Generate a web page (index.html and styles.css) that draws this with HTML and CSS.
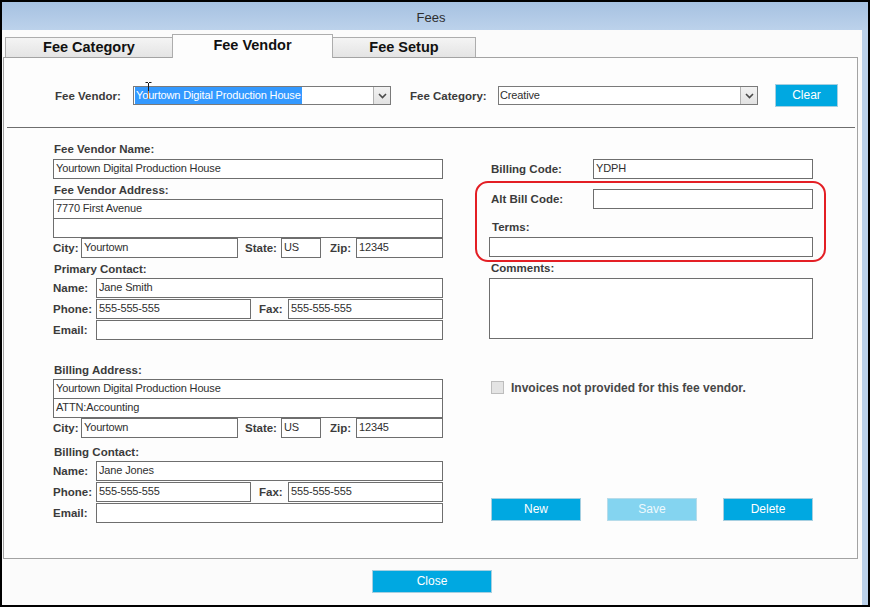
FILE: index.html
```html
<!DOCTYPE html>
<html>
<head>
	<title>Fees</title>
	<link rel="stylesheet" href="styles.css">
</head>
<body>
	<div class="window">
		<div class="titlebar">Fees</div>
		<div class="client">
			<div class="tabs">
				<div class="tab tab-category">Fee Category</div>
				<div class="tab tab-vendor active">Fee Vendor</div>
				<div class="tab tab-setup">Fee Setup</div>
			</div>
			<div class="panel">
				<div class="lookup">
					<span class="lbl lookup-vendor-lbl">Fee Vendor:</span>
					<div class="combo combo-vendor">
						<span class="combo-text"><span class="selected">Yourtown Digital Production House</span></span>
						<span class="combo-btn">
							<svg width="9" height="6" viewBox="0 0 9 6"><polyline points="1,1 4.5,4.5 8,1" fill="none" stroke="#4a4a4a" stroke-width="1.6"/></svg>
						</span>
						<svg class="ibeam" width="7" height="18" viewBox="0 0 7 18">
							<path d="M0.5 0.5 H3 M4 0.5 H6.5 M3.5 1 V9" stroke="#1a1a1a" stroke-width="1" fill="none"/>
							<path d="M3.5 9 V17" stroke="#c8722e" stroke-width="1" fill="none"/>
						</svg>
					</div>
					<span class="lbl lookup-category-lbl">Fee Category:</span>
					<div class="combo combo-category">
						<span class="combo-text">Creative</span>
						<span class="combo-btn">
							<svg width="9" height="6" viewBox="0 0 9 6"><polyline points="1,1 4.5,4.5 8,1" fill="none" stroke="#4a4a4a" stroke-width="1.6"/></svg>
						</span>
					</div>
					<button class="btn btn-clear">Clear</button>
				</div>
				<div class="divider"></div>

				<div class="form">
					<div class="col-left">
						<div class="section-label first">Fee Vendor Name:</div>
						<input class="box" value="Yourtown Digital Production House">
						<div class="section-label">Fee Vendor Address:</div>
						<div class="stack">
							<input class="box" value="7770 First Avenue">
							<input class="box" value="">
						</div>
						<div class="row">
							<span class="lbl w-city">City:</span>
							<input class="box w-city-in" value="Yourtown">
							<span class="lbl w-state">State:</span>
							<input class="box w-state-in" value="US">
							<span class="lbl w-zip">Zip:</span>
							<input class="box w-zip-in" value="12345">
						</div>
						<div class="section-label">Primary Contact:</div>
						<div class="row">
							<span class="lbl w-name">Name:</span>
							<input class="box grow" value="Jane Smith">
						</div>
						<div class="row">
							<span class="lbl w-name">Phone:</span>
							<input class="box w-phone-in" value="555-555-555">
							<span class="lbl w-fax">Fax:</span>
							<input class="box grow" value="555-555-555">
						</div>
						<div class="row">
							<span class="lbl w-name">Email:</span>
							<input class="box grow" value="">
						</div>

						<div class="section-label billing-start">Billing Address:</div>
						<div class="stack">
							<input class="box" value="Yourtown Digital Production House">
							<input class="box" value="ATTN:Accounting">
						</div>
						<div class="row">
							<span class="lbl w-city">City:</span>
							<input class="box w-city-in" value="Yourtown">
							<span class="lbl w-state">State:</span>
							<input class="box w-state-in" value="US">
							<span class="lbl w-zip">Zip:</span>
							<input class="box w-zip-in" value="12345">
						</div>
						<div class="section-label billing-contact">Billing Contact:</div>
						<div class="row">
							<span class="lbl w-name">Name:</span>
							<input class="box grow" value="Jane Jones">
						</div>
						<div class="row">
							<span class="lbl w-name">Phone:</span>
							<input class="box w-phone-in" value="555-555-555">
							<span class="lbl w-fax">Fax:</span>
							<input class="box grow" value="555-555-555">
						</div>
						<div class="row">
							<span class="lbl w-name">Email:</span>
							<input class="box grow" value="">
						</div>
					</div>

					<div class="col-right">
						<div class="row">
							<span class="lbl w-code">Billing Code:</span>
							<input class="box grow" value="YDPH">
						</div>
						<div class="highlight">
							<div class="row first-row">
								<span class="lbl w-code">Alt Bill Code:</span>
								<input class="box grow" value="">
							</div>
							<div class="section-label terms">Terms:</div>
							<input class="box" value="">
						</div>
						<div class="section-label comments">Comments:</div>
						<textarea class="box notes"></textarea>
						<div class="check-row">
							<span class="check"></span>
							<span class="check-lbl">Invoices not provided for this fee vendor.</span>
						</div>
						<div class="actions">
							<button class="btn">New</button>
							<button class="btn btn-disabled">Save</button>
							<button class="btn">Delete</button>
						</div>
					</div>
				</div>
			</div>
			<div class="footer">
				<button class="btn btn-close">Close</button>
			</div>
		</div>
	</div>
</body>
</html>
```

FILE: styles.css
```css
* {
	box-sizing: border-box;
}

html, body {
	margin: 0;
	padding: 0;
}

body {
	width: 870px;
	height: 607px;
	font-family: "Liberation Sans", Arial, sans-serif;
	background: #000;
}

.window {
	width: 870px;
	height: 607px;
	border: 2px solid #000;
	background: #bbd1ea;
	display: flex;
	flex-direction: column;
}

.titlebar {
	height: 28px;
	background: linear-gradient(#a6c1e1, #bcd2eb);
	text-align: center;
	line-height: 32px;
	font-size: 13px;
	color: #2e2e2e;
	padding-right: 8px;
	overflow: hidden;
}

.client {
	flex: 1;
	margin-right: 6px;
	background: #fbfbfb;
	display: flex;
	flex-direction: column;
}

/* tabs */
.tabs {
	display: flex;
	align-items: flex-end;
	height: 23px;
	margin: 4px 0 0 3px;
	position: relative;
	z-index: 1;
}

.tab {
	height: 20px;
	border: 1px solid #adadad;
	border-bottom: none;
	background: linear-gradient(#f4f4f4, #e4e4e4);
	font-size: 14.5px;
	font-weight: bold;
	color: #111;
	text-align: center;
	line-height: 19px;
}

.tab-category {
	width: 168px;
}

.tab-vendor {
	width: 161px;
	margin-left: -1px;
}

.tab-setup {
	width: 144px;
	margin-left: -1px;
}

.tab.active {
	height: 24px;
	margin-bottom: -1px;
	background: #fdfdfd;
	line-height: 20px;
	position: relative;
	z-index: 2;
}

/* panel */
.panel {
	height: 502px;
	margin: 0 4px 0 1px;
	border: 1px solid #a3a3a3;
	background: #fdfdfd;
}

.lbl {
	font-size: 11.5px;
	font-weight: bold;
	color: #3b3b3b;
	white-space: nowrap;
}

.lookup {
	display: flex;
	align-items: center;
	height: 23px;
	margin-top: 26px;
	padding-left: 51px;
}

.lookup-vendor-lbl {
	width: 78px;
}

.lookup-category-lbl {
	width: 88px;
	margin-left: 19px;
}

.combo {
	height: 19px;
	border: 1px solid #7a7a7a;
	background: #fff;
	display: flex;
	position: relative;
}

.combo-vendor {
	width: 258px;
}

.combo-category {
	width: 260px;
}

.combo-text {
	flex: 1;
	font-size: 11px;
	letter-spacing: -0.15px;
	color: #2f2f2f;
	line-height: 16px;
	padding-left: 1px;
}

.selected {
	display: inline-block;
	background: #3399ff;
	color: #fff;
	padding: 0 1px;
	height: 17px;
}

.combo-btn {
	width: 17px;
	height: 17px;
	background: linear-gradient(#f2f2f2, #e2e2e2);
	border-left: 1px solid #b0b0b0;
	display: flex;
	align-items: center;
	justify-content: center;
}

.ibeam {
	position: absolute;
	left: 11px;
	top: -5px;
}

.btn {
	height: 23px;
	border: 1px solid #a6cfe0;
	background: #00a8e1;
	color: #fff;
	font-family: "Liberation Sans", Arial, sans-serif;
	font-size: 12px;
	padding: 0 0 1px;
}

.btn-clear {
	width: 63px;
	margin-left: 17px;
}

.divider {
	height: 1px;
	margin: 20px 2px 0 3px;
	background: #6e6e6e;
}

/* form */
.form {
	display: flex;
	align-items: flex-start;
	padding-left: 49px;
}

.col-left {
	width: 390px;
	padding-top: 14px;
}

.col-right {
	width: 324px;
	margin-left: 46px;
	padding-top: 31px;
}

.section-label {
	font-size: 11.5px;
	font-weight: bold;
	color: #3b3b3b;
	line-height: 14px;
	height: 14px;
	margin: 4px 0 2px;
	padding-left: 1px;
}

.section-label.first {
	margin: 0 0 3px;
}

.section-label.billing-start {
	margin-top: 23px;
}

.section-label.billing-contact {
	margin-top: 7px;
}

.box {
	display: block;
	width: 100%;
	height: 20px;
	margin: 0;
	padding: 0 2px 2px;
	border: 1px solid #6e6e6e;
	border-radius: 0;
	background: #fff;
	font-family: "Liberation Sans", Arial, sans-serif;
	font-size: 11px;
	letter-spacing: -0.15px;
	color: #2f2f2f;
	outline: none;
}

.stack .box + .box {
	margin-top: -1px;
}

.row {
	display: flex;
	align-items: center;
	height: 20px;
}

.row + .row {
	margin-top: 1px;
}

.grow {
	flex: 1;
	width: auto;
	min-width: 0;
}

.w-city { width: 28px; }
.w-city-in { width: 157px; }
.w-state { width: 36px; margin-left: 7px; }
.w-state-in { width: 40px; }
.w-zip { width: 26px; margin-left: 9px; }
.w-zip-in { width: 87px; }
.w-name { width: 43px; }
.w-phone-in { width: 155px; }
.w-fax { width: 29px; margin-left: 8px; }
.w-code { width: 104px; padding-left: 2px; }

.highlight {
	margin: 2px -13px 0 -14px;
	border: 2px solid #e31e24;
	border-radius: 13px;
	padding: 6px 11px 3px 12px;
}

.section-label.terms {
	margin: 11px 0 3px;
	padding-left: 3px;
}

.section-label.comments {
	margin: -1px 0 3px;
	padding-left: 2px;
}

.notes {
	height: 61px;
	resize: none;
}

.check-row {
	display: flex;
	align-items: center;
	height: 13px;
	margin-top: 42px;
	padding-left: 2px;
}

.check {
	width: 13px;
	height: 13px;
	border: 1px solid #bdbdbd;
	background: #e4e4e4;
}

.check-lbl {
	margin-left: 7px;
	font-size: 12px;
	font-weight: bold;
	color: #474747;
}

.actions {
	display: flex;
	gap: 26px;
	margin-top: 104px;
	padding-left: 2px;
}

.actions .btn {
	width: 90px;
}

.btn-disabled {
	background: #84d4f0;
	border-color: #b7dcea;
	color: #eef9fd;
}

.footer {
	flex: 1;
	display: flex;
	justify-content: center;
	padding-top: 11px;
}

.btn-close {
	width: 120px;
}
```
